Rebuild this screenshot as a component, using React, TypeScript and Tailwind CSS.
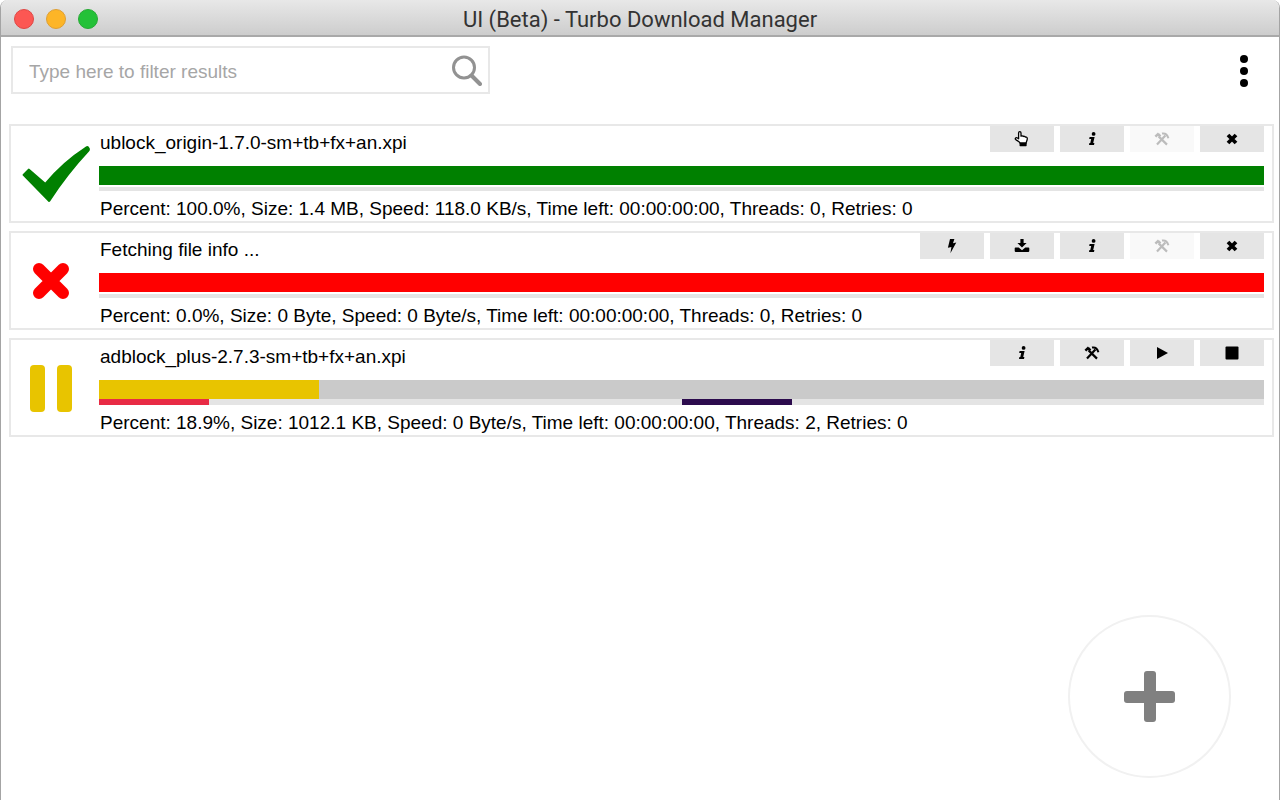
import type { ReactNode } from "react";

type IconName = "hand" | "info" | "tools" | "close" | "bolt" | "download" | "play" | "stop";

const glyphs: Record<IconName, ReactNode> = {
  hand: (
    <g fill="none" stroke="currentColor" strokeWidth="1.300" strokeLinejoin="round">
      <path fill="#fff" d="M4.600 7.800V1.900a1.200 1.200 0 0 1 2.400 0v3.300c.5-.5 1.800-.5 2.200.3.700-.5 1.800-.2 2.100.6.900-.3 2 .2 2 1.300 0 2-1 3.200-1.200 4.800H6.200c-.5-1.600-3-2.300-4.500-3.700-1-1 .1-2.300 1.300-1.700z" />
      <path d="M6.200 12.200h5.800v2.400H6.200z" fill="currentColor" />
    </g>
  ),
  info: (
    <>
      <circle cx="9.600" cy="2.900" r="1.900" />
      <path d="M5.600 5.900h5L9.200 12h1.200l-.4 2H5L5.400 12h.9l.9-4.100H5.200z" />
    </>
  ),
  tools: (
    <g fill="none" stroke="currentColor">
      <path d="M3 13.600 11.400 4.600M4.600 5.400 13 13.600" strokeWidth="2.200" />
      <path d="M8 2.600c3-.6 5.300 1 6.400 4.600" strokeWidth="2" />
      <path d="M1.400 5.600 4.800 2.400M4.200 3.200 6.400 5.400" strokeWidth="2.600" />
    </g>
  ),
  close: <path d="M4 4 12 12M12 4 4 12" stroke="currentColor" strokeWidth="3.800" />,
  bolt: <path d="M6 1h4.400L9 5.200l3.300-.6L6.400 15.200l1-6.300-3.500.8z" />,
  download: (
    <>
      <path d="M6.400 1h3.200v4h3L8 9.600 3.400 5h3z" />
      <path d="M1.500 9.500h3.200L8 12.200l3.300-2.700h3.200q.8 0 .8.800v2.800q0 .8-.8.800h-13q-.8 0-.8-.8v-2.800q0-.8.800-.8z" />
    </>
  ),
  play: <path d="M3 2v12L14 8z" />,
  stop: <rect x="1.500" y="1.500" width="13" height="13" rx="1" />,
};

type Action = { icon: IconName; label: string; disabled?: boolean };

const info: Action = { icon: "info", label: "Information" };
const noTools: Action = { icon: "tools", label: "Modify", disabled: true };
const remove: Action = { icon: "close", label: "Remove" };

type Segment = { start: number; width: number; color: string };
type Download = {
  name: string;
  status: "done" | "error" | "paused";
  percent: number;
  summary: string;
  segments: Segment[];
  actions: Action[];
};

const downloads: Download[] = [
  {
    name: "ublock_origin-1.7.0-sm+tb+fx+an.xpi",
    status: "done",
    percent: 100,
    summary: "Percent: 100.0%, Size: 1.4 MB, Speed: 118.0 KB/s, Time left: 00:00:00:00, Threads: 0, Retries: 0",
    segments: [],
    actions: [{ icon: "hand", label: "Open" }, info, noTools, remove],
  },
  {
    name: "Fetching file info ...",
    status: "error",
    percent: 100,
    summary: "Percent: 0.0%, Size: 0 Byte, Speed: 0 Byte/s, Time left: 00:00:00:00, Threads: 0, Retries: 0",
    segments: [],
    actions: [{ icon: "bolt", label: "Retry" }, { icon: "download", label: "Download" }, info, noTools, remove],
  },
  {
    name: "adblock_plus-2.7.3-sm+tb+fx+an.xpi",
    status: "paused",
    percent: 18.9,
    summary: "Percent: 18.9%, Size: 1012.1 KB, Speed: 0 Byte/s, Time left: 00:00:00:00, Threads: 2, Retries: 0",
    segments: [
      { start: 0, width: 9.45, color: "#e82b45" },
      { start: 50, width: 9.45, color: "#2c0b4d" },
    ],
    actions: [
      info,
      { icon: "tools", label: "Modify" },
      { icon: "play", label: "Resume" },
      { icon: "stop", label: "Stop" },
    ],
  },
];

const barColor = { done: "bg-[#008000]", error: "bg-[#ff0000]", paused: "bg-[#e8c400]" };

function StatusIcon({ status }: { status: Download["status"] }) {
  return (
    <svg viewBox="0 0 88 95" className="h-[95px] w-[88px] shrink-0" role="img" aria-label={status}>
      {status === "done" && (
        <path fill="#008000" d="M11.800 48.200 17 43Q17.800 42.200 18.600 43L34.200 56.500Q51 36 75 20.400Q76.500 19.500 77.800 20.800L78.900 22.800Q79.200 24.200 78 25.600Q57 48 39.200 75.300Q38.200 76.600 37.200 75.400L11.800 49.600Q11.200 48.900 11.800 48.200Z" />
      )}
      {status === "error" && (
        <path d="M28 36 52 60M52 36 28 60" stroke="#ff0000" strokeWidth="12" strokeLinecap="round" />
      )}
      {status === "paused" && (
        <g fill="#e8c400">
          <rect x="19" y="25" width="15" height="47" rx="4" />
          <rect x="46" y="25" width="15" height="47" rx="4" />
        </g>
      )}
    </svg>
  );
}

function DownloadRow({ item }: { item: Download }) {
  return (
    <li className="flex border-2 border-[#e8e8e8] pr-2">
      <StatusIcon status={item.status} />
      <div className="min-w-0 flex-1">
        <div className="flex h-10 items-start justify-between">
          <h2 className="truncate pt-1 pl-px text-[19px] leading-[26px]">{item.name}</h2>
          <div className="flex shrink-0 gap-1.5">
            {item.actions.map((a) => (
              <button
                key={a.icon}
                aria-label={a.label}
                disabled={a.disabled}
                className="flex h-[26px] w-16 items-center justify-center bg-[#e5e5e5] disabled:bg-[#f9f9f9] disabled:text-[#bcbcbc]"
              >
                <svg viewBox="0 0 16 16" className="size-4" fill="currentColor" aria-hidden="true">
                  {glyphs[a.icon]}
                </svg>
              </button>
            ))}
          </div>
        </div>
        <div className="h-[19px] bg-[#cacaca]">
          <div className={`h-full ${barColor[item.status]}`} style={{ width: `${item.percent}%` }} />
        </div>
        <div className={`relative bg-[#e4e4e4] ${item.segments.length ? "h-1.5" : "mt-0.5 h-1"}`}>
          {item.segments.map((s) => (
            <div
              key={s.start}
              className="absolute inset-y-0"
              style={{ left: `${s.start}%`, width: `${s.width}%`, backgroundColor: s.color }}
            />
          ))}
        </div>
        <p className="truncate pt-1.5 pl-px text-[19px] leading-6">{item.summary}</p>
      </div>
    </li>
  );
}

export default function App() {
  return (
    <div className="flex min-h-screen flex-col overflow-hidden rounded-t-lg border-x border-[#a4a4a4] bg-white font-['Liberation_Sans',sans-serif] text-black">
      <header className="grid h-[37px] grid-cols-[1fr_auto_1fr] items-center border-b-2 border-[#a9a9a9] bg-linear-to-b from-[#e8e8e8] to-[#cdcdcd] px-[13px] pt-0.5">
        <div className="flex gap-3">
          <button aria-label="Close window" className="size-5 rounded-full border border-[#df4744] bg-[#fc5753]" />
          <button aria-label="Minimize window" className="size-5 rounded-full border border-[#de9f34] bg-[#fdb527]" />
          <button aria-label="Zoom window" className="size-5 rounded-full border border-[#27aa35] bg-[#24c138]" />
        </div>
        <h1 className="pt-0.5 font-[Roboto,sans-serif] text-[22px] leading-7 text-[#333333]">UI (Beta) - Turbo Download Manager</h1>
      </header>

      <div className="flex items-start justify-between pt-[9px] pr-[21px] pl-2.5">
        <label className="flex h-12 w-[479px] items-center border-2 border-[#e8e8e8] pr-1.5 pl-4">
          <input
            type="text"
            aria-label="Filter results"
            placeholder="Type here to filter results"
            className="h-full min-w-0 flex-1 pt-1 text-[19px] outline-none placeholder:text-[#a6a6a6]"
          />
          <svg viewBox="0 0 32 32" className="size-8" fill="none" stroke="#929292" aria-hidden="true">
            <circle cx="14" cy="13.500" r="10.500" strokeWidth="3" />
            <path d="M21.500 21.500 30 30" strokeWidth="4" strokeLinecap="round" />
          </svg>
        </label>
        <button aria-label="Menu" className="flex h-[50px] w-7 flex-col items-center justify-center gap-1">
          <span className="size-2 rounded-full bg-black" />
          <span className="size-2 rounded-full bg-black" />
          <span className="size-2 rounded-full bg-black" />
        </button>
      </div>

      <ul className="flex flex-col gap-2 pt-7 pr-[5px] pl-2">
        {downloads.map((d) => (
          <DownloadRow key={d.name} item={d} />
        ))}
      </ul>

      <button
        aria-label="Add download"
        className="fixed right-[49px] bottom-[22px] flex size-[163px] items-center justify-center rounded-full border-2 border-[#f1f1f1] bg-white"
      >
        <svg viewBox="0 0 52 52" className="size-[52px]" fill="#808080" aria-hidden="true">
          <rect x="20" y="0" width="12" height="51" rx="3" />
          <rect x="0" y="20" width="51" height="12" rx="3" />
        </svg>
      </button>
    </div>
  );
}
